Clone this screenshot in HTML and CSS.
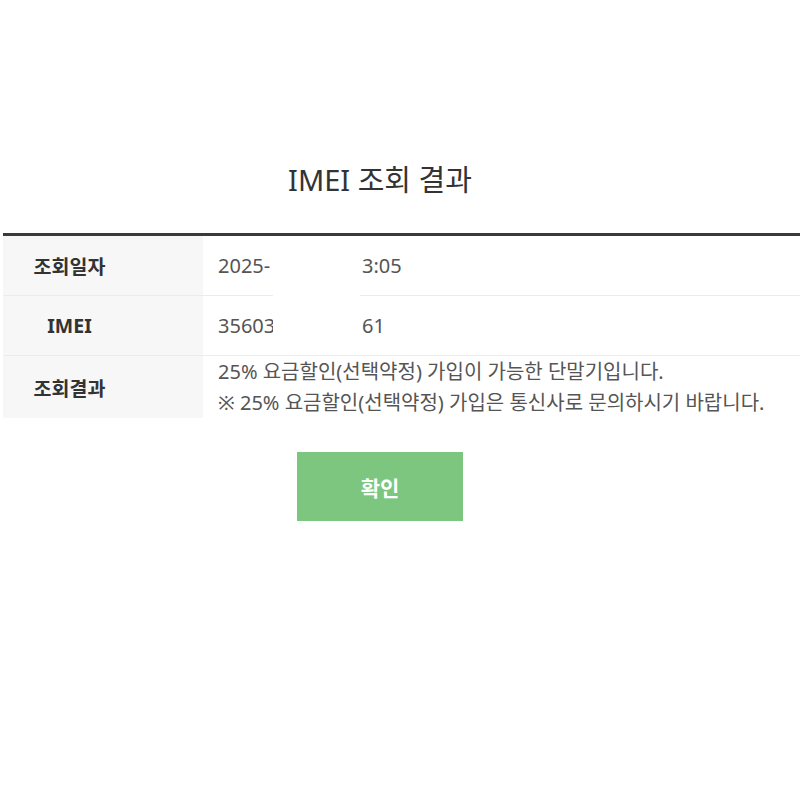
FILE: index.html
```html
<!DOCTYPE html>
<html lang="ko">
<head>
    <meta charset="UTF-8">
    <title>IMEI 조회 결과</title>
    <link rel="stylesheet" href="styles.css">
</head>
<body>
    <div class="result-page">
        <h2 class="page-title">IMEI 조회 결과</h2>

        <table class="result-table">
            <tr>
                <th>조회일자</th>
                <td><span class="val-a">2025-</span><span class="val-b">3:05</span></td>
            </tr>
            <tr>
                <th>IMEI</th>
                <td><span class="val-a">35603</span><span class="val-b">61</span></td>
            </tr>
            <tr class="multi">
                <th>조회결과</th>
                <td>
                    25% 요금할인(선택약정) 가입이 가능한 단말기입니다.<br>
                    ※ 25% 요금할인(선택약정) 가입은 통신사로 문의하시기 바랍니다.
                </td>
            </tr>
        </table>
        <!-- 개인정보 가림 -->
        <div class="mask"></div>

        <div class="btn-area">
            <button class="btn-ok">확인</button>
        </div>
    </div>
</body>
</html>
```

FILE: styles.css
```css
body {
    margin: 0;
    font-family: "Noto Sans", "Noto Sans CJK KR", sans-serif;
    color: #333;
    background: #fff;
}

.result-page {
    position: relative;
    padding-top: 160px;
}

.page-title {
    margin: 0 40px 33px 0;
    text-align: center;
    font-size: 29px;
    font-weight: 400;
    line-height: 40px;
    color: #333;
}

/* 결과 테이블 */
.result-table {
    width: 797px;
    margin-left: 3px;
    border-collapse: collapse;
    border-top: 3px solid #3a3a3a;
    table-layout: fixed;
}

.result-table th {
    width: 133px;
    padding: 0 67px 0 0;
    height: 59px;
    background: #f7f7f7;
    border-bottom: 1px solid #ececec;
    font-size: 19.5px;
    font-weight: 700;
    color: #333;
    text-align: center;
}

.result-table td {
    padding: 0 0 0 15px;
    height: 59px;
    border-bottom: 1px solid #ececec;
    font-size: 20px;
    color: #555;
    text-align: left;
    white-space: nowrap;
}

.result-table tr:last-child th,
.result-table tr:last-child td {
    border-bottom: none;
}

.result-table .multi td {
    height: 60px;
    line-height: 31px;
}

.val-a {
    display: inline-block;
    width: 144px;
}

.mask {
    position: absolute;
    left: 273px;
    top: 237px;
    width: 87px;
    height: 113px;
    background: #fff;
}

.btn-area {
    margin: 34px 40px 0 0;
    text-align: center;
}

.btn-ok {
    width: 166px;
    height: 69px;
    border: none;
    background: #7dc67f;
    color: #fff;
    font-family: inherit;
    font-size: 21px;
    font-weight: 700;
    cursor: pointer;
}
```
